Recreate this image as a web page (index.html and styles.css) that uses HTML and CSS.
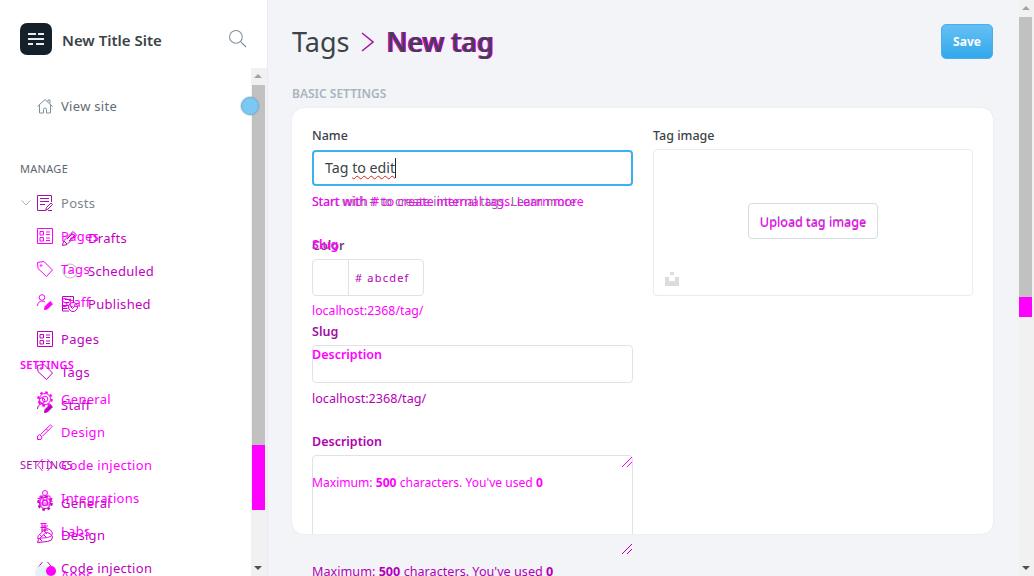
FILE: index.html
```html
<!DOCTYPE html>
<html lang="en">
<head>
    <meta charset="UTF-8">
    <meta name="viewport" content="width=device-width, initial-scale=1.0">
    <title>New tag</title>
    <link rel="stylesheet" href="styles.css">
</head>
<body>

<!-- Icon set -->
<svg class="icon-defs" width="0" height="0">
    <symbol id="i-home" viewBox="0 0 16 16"><path d="M.5 8.500L8 1.500l7.500 7M2.500 7v8h4v-3.500a1.500 1.500 0 0 1 3 0V15h4V7M11 3.500V2h2v3.500"/></symbol>
    <symbol id="i-posts" viewBox="0 0 16 16"><path d="M14.500 7V.5H.5v15h8M3 3.500h9M3 6.500h9M3 9.500h5M8.500 15.500l1-3L14 8l1.500 1.500-4.500 4.500zM11 15.500h4"/></symbol>
    <symbol id="i-pages" viewBox="0 0 16 16"><path d="M.5.5h15v15H.5zM3 3.500h3.500V7H3zM3 9.500h3.500V13H3zM9 4h4M9 6.500h4M9 10h4M9 12.500h4"/></symbol>
    <symbol id="i-tag" viewBox="0 0 16 16"><path d="M.5 1.500l6.500-1 8.500 8.500-6 6.500L1 7.500z"/><circle cx="4" cy="4.500" r=".8"/></symbol>
    <symbol id="i-staff" viewBox="0 0 16 16"><circle cx="5" cy="3.500" r="2.800"/><path d="M.5 12c0-3 2-5 4.500-5 1.200 0 2.200.4 3 1"/><path class="solid" d="M7.500 15.500l.6-3 5-5 2.400 2.400-5 5z"/></symbol>
    <symbol id="i-pencil" viewBox="0 0 16 16"><path d="M.5 15.500l1-4.500L11 1.500l3.500 3.500L5 14.500zM9.500 3l3.500 3.500M2 11l3 3M5 9l5-5M7 11l5-5"/></symbol>
    <symbol id="i-clock" viewBox="0 0 16 16"><circle cx="8" cy="8" r="7"/><path d="M8 4v4l3 2"/></symbol>
    <symbol id="i-published" viewBox="0 0 16 16"><path d="M7 15H.5V.5h11V6M3 3.500h6M3 6.500h4"/><circle cx="11" cy="11" r="4.500"/><path d="M9 11l1.500 1.500L13 10M.5 9.500h6M.5 12.500h5"/></symbol>
    <symbol id="i-gear" viewBox="0 0 16 16"><circle cx="8" cy="8" r="5.500"/><circle cx="8" cy="8" r="6.800" stroke-width="2" stroke-dasharray="2.700 2.640"/><circle cx="8" cy="8" r="2.800"/></symbol>
    <symbol id="i-brush" viewBox="0 0 16 16"><path d="M.5 15.500V12l2-1.500 2.500 2.500-1 2.500zM3.500 10.500L13.500.8l1.700 1.700-9.700 9.700M9.500 5l1.500 1.500"/></symbol>
    <symbol id="i-code" viewBox="0 0 16 16"><path d="M5.500 2L.5 8l5 6M10.500 2l5 6-5 6"/></symbol>
    <symbol id="i-plugin" viewBox="0 0 16 16"><circle cx="8" cy="3" r="2.500"/><path d="M3 6h10v9H3zM.5 8.500H3M.5 11.500H3M13 8.500h2.500M13 11.500h2.500M6 9h1v2H6zM9 9h1v2H9zM3 13h10"/></symbol>
    <symbol id="i-labs" viewBox="0 0 16 16"><path d="M3.500.5h6M5 .5V5M8 .5V5M5 3h6M.5 15.500l1-3 7-6.500 2-.5 3 1.500 2 3-1 3-4 1.500zM2 11l3 3M7 8l3 3"/></symbol>
</svg>

<!-- Sidebar -->
<aside class="sidebar">
    <div class="brand">
        <div class="brand-logo">
            <svg viewBox="0 0 16 16" width="16" height="16"><path d="M0 2h8v2H0zM10 2h6v2h-6zM0 7h16v2H0zM0 12h5v2H0zM8 12h8v2H8z"/></svg>
        </div>
        <div class="brand-name">New Title Site</div>
        <svg class="brand-search" viewBox="0 0 16 16" width="17" height="17"><circle cx="6.500" cy="6.500" r="6"/><path d="M11 11l5 5"/></svg>
    </div>

    <div class="side-scroll">
        <div class="side-bar-track">
            <span class="arrow-up"></span>
            <div class="side-thumb"></div>
            <div class="side-thumb-mark"></div>
            <span class="arrow-down"></span>
        </div>
        <div class="view-dot"></div>

        <nav class="nav">
            <a class="row row-view"><svg class="ico"><use href="#i-home"/></svg>View site</a>
            <div class="nav-title">MANAGE</div>
            <a class="row row-gray">
                <svg class="chevron" viewBox="0 0 10 6" width="10" height="6"><path d="M.5.500L5 5 9.500.500"/></svg>
                <svg class="ico"><use href="#i-posts"/></svg>Posts
            </a>
            <a class="row sub sub-first"><svg class="ico"><use href="#i-pencil"/></svg>Drafts</a>
            <a class="row sub"><svg class="ico ico-gray"><use href="#i-clock"/></svg>Scheduled</a>
            <a class="row sub"><svg class="ico"><use href="#i-published"/></svg>Published</a>
            <a class="row row-pages"><svg class="ico"><use href="#i-pages"/></svg>Pages</a>
            <a class="row"><svg class="ico"><use href="#i-tag"/></svg>Tags</a>
            <a class="row"><svg class="ico"><use href="#i-staff"/></svg>Staff</a>
            <div class="nav-title nav-title-settings">SETTINGS</div>
            <a class="row row-general"><svg class="ico"><use href="#i-gear"/></svg>General</a>
            <a class="row row-tight"><svg class="ico"><use href="#i-labs"/></svg>Design</a>
            <a class="row"><svg class="ico"><use href="#i-code"/></svg>Code injection</a>
        </nav>

        <!-- Second copy of the nav, drawn over the first -->
        <nav class="nav nav-ghost">
            <a class="row"><svg class="ico"><use href="#i-pages"/></svg>Pages</a>
            <a class="row"><svg class="ico"><use href="#i-tag"/></svg>Tags</a>
            <a class="row"><svg class="ico"><use href="#i-staff"/></svg>Staff</a>
            <div class="nav-title nav-title-ghost">SETTINGS</div>
            <a class="row row-ghost-first"><svg class="ico"><use href="#i-gear"/></svg>General</a>
            <a class="row"><svg class="ico"><use href="#i-brush"/></svg>Design</a>
            <a class="row"><svg class="ico"><use href="#i-code"/></svg>Code injection</a>
            <a class="row"><svg class="ico"><use href="#i-plugin"/></svg>Integrations</a>
            <a class="row"><svg class="ico"><use href="#i-labs"/></svg>Labs</a>
            <a class="row row-apps"><span class="apps-dot"></span>Apps</a>
        </nav>
    </div>
</aside>

<!-- Main content -->
<main class="main">
    <header class="page-head">
        <h1 class="page-title">
            <span>Tags</span>
            <svg class="crumb" viewBox="0 0 13 20" width="13" height="20"><path d="M1 1l11 9-11 9"/></svg>
            <span class="page-title-new">New tag</span>
        </h1>
        <button class="save-btn" type="button">Save</button>
    </header>

    <div class="section-title">BASIC SETTINGS</div>

    <section class="card">
        <div class="col">
            <label class="label">Name</label>
            <div class="input input-focus"><span>Tag <span class="typo">to edit</span></span></div>
            <div class="hint">
                Start with # to create internal tags. Learn more
                <span class="hint-ghost">Start with # to create internal tags. Learn more</span>
            </div>

            <label class="label label-gap">
                Color
                <span class="label-ghost">Slug</span>
            </label>
            <div class="color-field">
                <div class="color-swatch"></div>
                <div class="color-value"># abcdef</div>
            </div>
            <div class="url url-ghost">localhost:2368/tag/</div>
            <label class="label label-slug">Slug</label>
            <div class="input input-slug">
                <span class="label-ghost label-ghost-desc">Description</span>
            </div>
            <div class="url">localhost:2368/tag/</div>

            <label class="label label-gap label-desc">Description</label>
            <div class="textarea">
                <span class="max-ghost">Maximum: <b>500</b> characters. You've used <b>0</b></span>
                <svg class="resizer resizer-top" viewBox="0 0 10 10" width="10" height="10"><path d="M0 10L10 0M5 10l5-5"/></svg>
            </div>
        </div>

        <div class="col">
            <label class="label">Tag image</label>
            <div class="image-box">
                <div class="upload-btn">
                    Upload tag image
                    <span class="upload-ghost">Upload tag image</span>
                </div>
                <svg class="image-mark" viewBox="0 0 14 14" width="14" height="14"><path d="M5 0h4v3H5zM0 5h4v4h6V5h4v9H0z"/></svg>
            </div>
        </div>
    </section>

    <div class="below-card">
        <svg class="resizer" viewBox="0 0 10 10" width="10" height="10"><path d="M0 10L10 0M5 10l5-5"/></svg>
    </div>
    <div class="max-note">Maximum: <b>500</b> characters. You've used <b>0</b></div>
</main>

<!-- Page scrollbar -->
<div class="page-bar">
    <span class="arrow-up"></span>
    <div class="page-thumb"></div>
    <div class="page-thumb-mark"></div>
    <span class="arrow-down"></span>
</div>

</body>
</html>
```

FILE: styles.css
```css
* {
  box-sizing: border-box;
}

body {
  margin: 0;
  height: 576px;
  overflow: hidden;
  display: flex;
  font-family: "Noto Sans", "Open Sans", sans-serif;
  background-color: #f3f4f8;
  color: #3b4349;
}

.icon-defs {
  position: absolute;
}

symbol path, symbol circle {
  fill: none;
  stroke: currentColor;
}

symbol path.solid {
  fill: currentColor;
}

/* Sidebar */
.sidebar {
  width: 268px;
  flex: none;
  background: #fff;
  border-right: 1px solid #e8ebef;
  display: flex;
  flex-direction: column;
}

.brand {
  height: 68px;
  flex: none;
  padding: 9px 21px 0 20px;
  display: flex;
  align-items: center;
}

.brand-logo {
  width: 32px;
  height: 32px;
  border-radius: 7px;
  background: #15212a;
  display: flex;
  align-items: center;
  justify-content: center;
  margin-right: 10px;
}

.brand-logo path {
  fill: #e8ecef;
}

.brand-name {
  flex: 1;
  margin-top: 2px;
  font-size: 15px;
  font-weight: 600;
  color: #3b4349;
}

.brand-search {
  fill: none;
  stroke: #7d929f;
  overflow: visible;
}

.side-scroll {
  position: relative;
  flex: 1;
  overflow: hidden;
}

.side-bar-track {
  position: absolute;
  top: 0;
  right: 0;
  bottom: 0;
  width: 16px;
  background: #f1f1f1;
  display: flex;
  flex-direction: column;
  padding-left: 1px;
  z-index: 2;
}

.side-thumb {
  width: 13px;
  height: 360px;
  margin-top: 17px;
  background: #c1c1c1;
}

.side-thumb-mark {
  width: 13px;
  height: 65px;
  background: #f0f;
}

.arrow-up, .arrow-down {
  position: absolute;
  left: 3px;
  width: 0;
  height: 0;
  border-left: 4px solid transparent;
  border-right: 4px solid transparent;
}

.arrow-up {
  top: 6px;
  border-bottom: 4px solid #a3a3a3;
}

.arrow-down {
  bottom: 6px;
  border-top: 4px solid #505050;
}

.view-dot {
  position: absolute;
  top: 29px;
  left: 241px;
  width: 18px;
  height: 18px;
  border-radius: 50%;
  background: #7cc8f5;
  border: 1px solid #65b4e4;
  box-shadow: 0 0 0 1px rgba(150, 150, 150, 0.3);
  z-index: 3;
}

.nav {
  padding-top: 21px;
  font-size: 13px;
  letter-spacing: 0.3px;
}

.nav-ghost {
  position: absolute;
  top: 129px;
  left: 0;
  padding-top: 22px;
  width: 250px;
  color: #f0f;
  z-index: 1;
}

.row {
  display: flex;
  align-items: center;
  height: 33px;
  padding-left: 37px;
  color: #c000c0;
  position: relative;
  white-space: nowrap;
}

.ico {
  width: 16px;
  height: 16px;
  margin-right: 8px;
  flex: none;
  overflow: visible;
}

.nav-ghost .row {
  color: #f0f;
}

.ico-gray {
  color: #b9b9b9;
}

.row-view {
  color: #626d75;
}

.row-view .ico {
  color: #7d929f;
}

.row-gray {
  color: #7a858e;
}

.row-gray .ico {
  color: #a811a8;
}

.chevron {
  position: absolute;
  left: 21px;
  top: 14px;
  fill: none;
  stroke: #aab4bb;
}

.sub {
  padding-left: 62px;
}

.sub .ico {
  margin-right: 10px;
}

.sub-first {
  margin-top: 2px;
}

.row-pages {
  margin-top: 2px;
}

.nav-title {
  height: 16px;
  line-height: 16px;
  margin: 39px 0 9px 20px;
  font-size: 11px;
  letter-spacing: 0.3px;
  color: #5c6670;
}

.nav-title-settings {
  margin: 36px 0 0 20px;
  color: #a80fa8;
}

.nav-title-ghost {
  margin: 39px 0 0 20px;
  color: #f0f;
  font-weight: 600;
}

.row-ghost-first {
  margin-top: 9px;
}

.row-general {
  margin-top: 13px;
}

.row-tight {
  margin-top: -1px;
}

.row-apps {
  margin-top: 11px;
  padding-left: 61px;
}

.apps-dot {
  position: absolute;
  left: 46px;
  top: 8px;
  width: 10px;
  height: 10px;
  border-radius: 50%;
  background: #f0f;
  box-shadow: -8px 2px 0 3px #e6f2f8;
}

/* Main */
.main {
  flex: 1;
  min-width: 0;
  padding: 24px 26px 0 24px;
}

.page-head {
  display: flex;
  justify-content: space-between;
  align-items: flex-start;
  height: 35px;
}

.page-title {
  margin: 0;
  font-size: 27px;
  font-weight: 400;
  line-height: 36px;
  display: flex;
  align-items: center;
  color: #3b4349;
}

.crumb {
  margin: 0 13px 0 11px;
  fill: none;
  stroke: #a516a5;
  stroke-width: 1.500;
}

.page-title-new {
  font-weight: 500;
  text-shadow: -1px 0 0 #e000e0, 1px 0 0 #f0f;
}

.save-btn {
  width: 52px;
  height: 35px;
  padding: 0;
  border: 1px solid #49aee9;
  border-radius: 5px;
  background: linear-gradient(#66bff3, #32a9ec);
  color: #fff;
  font-family: inherit;
  font-size: 12px;
  font-weight: 700;
}

.section-title {
  margin-top: 27px;
  height: 16px;
  line-height: 16px;
  font-size: 12px;
  font-weight: 600;
  color: #a9b4bc;
}

.card {
  margin-top: 6px;
  height: 426px;
  overflow: hidden;
  background: #fff;
  border-radius: 12px;
  box-shadow: 0 0 2px rgba(0, 0, 0, 0.08);
  padding: 20px 20px 0;
  display: grid;
  grid-template-columns: 321px 320px;
  column-gap: 20px;
}

.col {
  min-width: 0;
}

.label {
  display: block;
  position: relative;
  height: 16px;
  line-height: 16px;
  margin-bottom: 6px;
  font-size: 12.500px;
  font-weight: 500;
  color: #3b4349;
}

.label-gap {
  margin-top: 28px;
  margin-bottom: 5px;
  font-weight: 600;
  color: #6f3f6f;
}

.label-slug {
  margin: 5px 0 5px;
  font-weight: 600;
  color: #a010a0;
}

.label-desc {
  margin-top: 27px;
  color: #b000b0;
}

.label-ghost {
  position: absolute;
  left: 0;
  top: -1px;
  color: #f0f;
  font-size: 12.500px;
  font-weight: 600;
  line-height: 16px;
}

.label-ghost-desc {
  left: -1px;
  top: 1px;
}

.input {
  position: relative;
  height: 38px;
  border: 1px solid #dfe3e7;
  border-radius: 4px;
  display: flex;
  align-items: center;
  padding-left: 12px;
  font-size: 14.200px;
}

.input-focus {
  height: 36px;
  border: 2px solid #3eb0ef;
  padding-left: 11px;
}

.input-focus > span {
  border-right: 1px solid #26292c;
  line-height: 20px;
}

.input-slug {
  padding-left: 0;
}

.typo {
  text-decoration: underline wavy #e02020 1px;
  text-underline-offset: 2px;
}

.hint {
  position: relative;
  margin-top: 8px;
  height: 16px;
  line-height: 16px;
  font-size: 12px;
  color: #7d6f86;
  white-space: nowrap;
}

.hint-ghost {
  position: absolute;
  left: 0;
  top: 0;
  font-size: 12.360px;
  color: #f0f;
}

.color-field {
  width: 112px;
  height: 37px;
  border: 1px solid #dfe3e7;
  border-radius: 4px;
  display: flex;
}

.color-swatch {
  width: 36px;
  border-right: 1px solid #dfe3e7;
}

.color-value {
  padding-left: 6px;
  line-height: 36px;
  font-size: 11px;
  letter-spacing: 1.200px;
  color: #b000b0;
}

.url {
  margin-top: 8px;
  height: 16px;
  line-height: 16px;
  font-size: 12.600px;
  color: #b400b4;
}

.url-ghost {
  margin-top: 7px;
  font-size: 12.300px;
  color: #f0f;
}

.textarea {
  position: relative;
  height: 99px;
  border: 1px solid #dfe3e7;
  border-radius: 4px;
  padding: 14px 0 0;
}

.max-ghost {
  margin-left: -1px;
  font-size: 12.100px;
  color: #f0f;
  white-space: nowrap;
}

.max-ghost b {
  font-weight: 700;
}

.resizer {
  fill: none;
  stroke: #b000b0;
  display: block;
}

.resizer-top {
  position: absolute;
  top: 1px;
  right: 0;
  stroke: #f0f;
}

.below-card {
  display: flex;
  justify-content: flex-end;
  padding-right: 361px;
  margin-top: 10px;
  height: 10px;
}

.max-note {
  margin: 9px 0 0 20px;
  height: 16px;
  line-height: 16px;
  font-size: 12.650px;
  color: #b400b4;
  white-space: nowrap;
}

.image-box {
  position: relative;
  height: 147px;
  margin-top: -1px;
  padding-bottom: 3px;
  border: 1px solid #e3edf3;
  border-radius: 4px;
  display: flex;
  align-items: center;
  justify-content: center;
}

.upload-btn {
  position: relative;
  width: 130px;
  height: 36px;
  line-height: 34px;
  text-align: center;
  background: #fff;
  border: 1px solid #d5dce2;
  border-radius: 4px;
  font-size: 12.700px;
  color: #7f8c96;
}

.upload-ghost {
  position: absolute;
  left: 0;
  right: 0;
  top: 1px;
  color: #f0f;
}

.image-mark {
  position: absolute;
  left: 11px;
  bottom: 9px;
  fill: #dcdcdc;
}

/* Page scrollbar */
.page-bar {
  position: relative;
  width: 15px;
  flex: none;
  background: #f1f1f1;
  display: flex;
  flex-direction: column;
  padding: 17px 2px 0 0;
}

.page-thumb {
  height: 280px;
  background: #c1c1c1;
}

.page-thumb-mark {
  height: 20px;
  background: #f0f;
}
```
